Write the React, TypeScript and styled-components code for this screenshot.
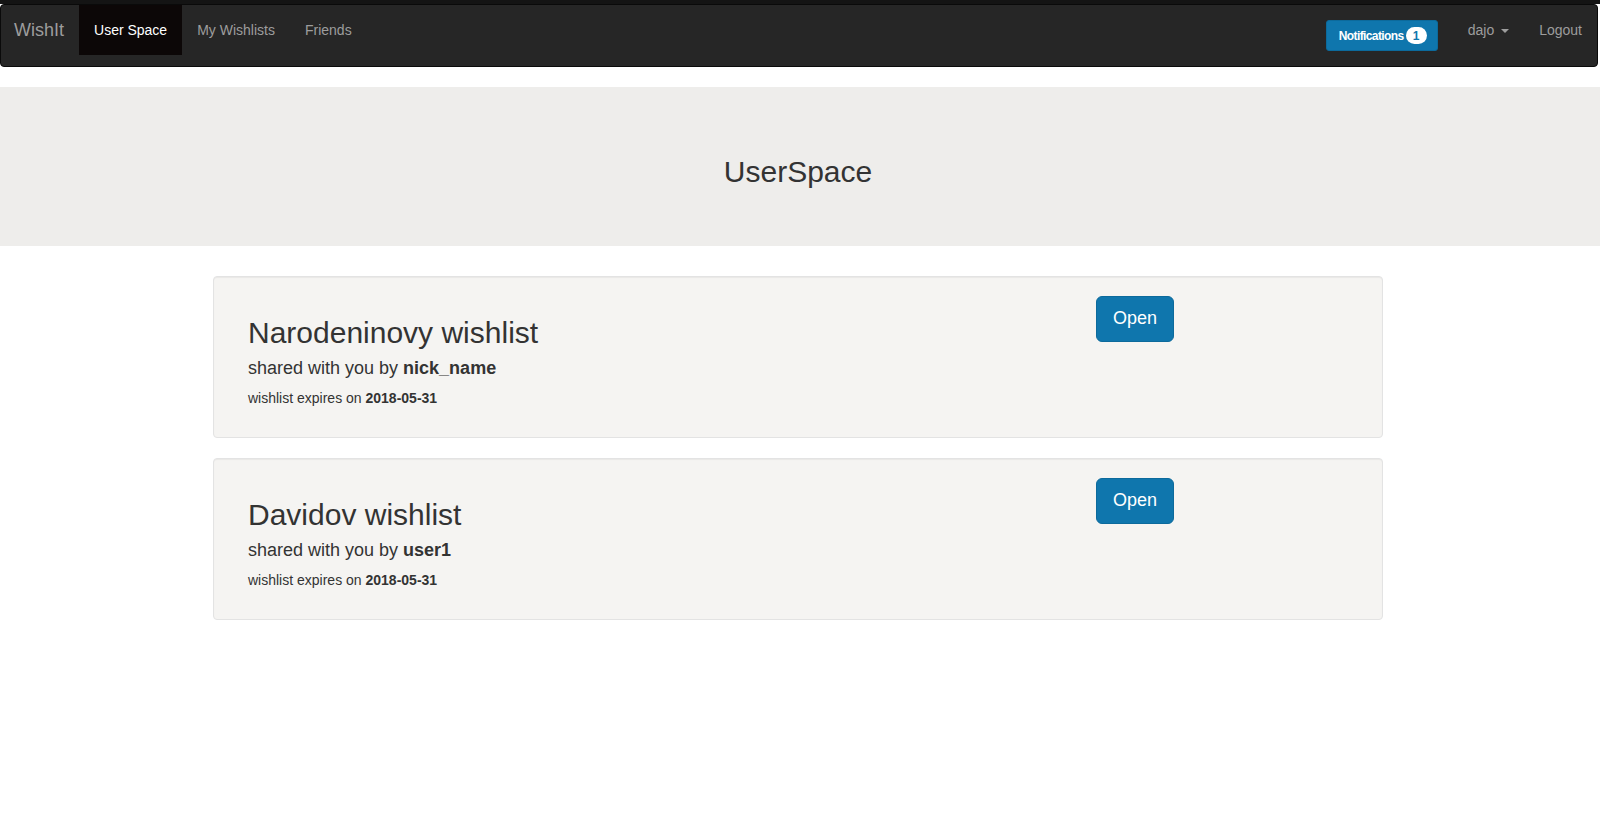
import React from "react";
import styled, { createGlobalStyle } from "styled-components";

const Global = createGlobalStyle`
  html, body { margin: 0; padding: 0; background: #fff; }
  body {
    font-family: "Liberation Sans", Arial, Helvetica, sans-serif;
    font-size: 14px;
    line-height: 1.42857;
    color: #333;
  }
  * { box-sizing: border-box; }
`;

const TopStrip = styled.div`
  height: 4px;
  background: #141414;
`;

const Navbar = styled.nav`
  margin-right: 2px;
  height: 63px;
  background: #262626;
  border: 1px solid #0a0a0a;
  border-radius: 4px;
  display: flex;
  align-items: flex-start;
  justify-content: space-between;
  margin-bottom: 20px;
`;

const NavGroup = styled.div`
  display: flex;
  align-items: flex-start;
`;

const Brand = styled.a`
  height: 50px;
  padding: 15px 15px 15px 13px;
  font-size: 18px;
  line-height: 20px;
  color: #9d9d9d;
  text-decoration: none;
`;

const NavLink = styled.a<{ $active?: boolean }>`
  display: flex;
  align-items: center;
  height: 50px;
  padding: 15px;
  line-height: 20px;
  font-size: 14px;
  color: ${(p) => (p.$active ? "#fff" : "#9d9d9d")};
  background: ${(p) => (p.$active ? "#0c0707" : "transparent")};
  text-decoration: none;
`;

const Caret = styled.span`
  display: inline-block;
  width: 0;
  height: 0;
  margin-left: 7px;
  margin-top: 1px;
  border-top: 4px solid #9d9d9d;
  border-left: 4px solid transparent;
  border-right: 4px solid transparent;
`;

const NotifButton = styled.button`
  margin-top: 15px;
  margin-right: 15px;
  height: 31px;
  width: 112px;
  padding: 0 10px 0 12px;
  display: flex;
  align-items: center;
  justify-content: space-between;
  background: #0f76ad;
  border: 1px solid #0c6a9c;
  border-radius: 3px;
  color: #fff;
  font-family: "Liberation Sans", Arial, sans-serif;
  font-size: 12px;
  font-weight: bold;
  letter-spacing: -0.6px;
  line-height: 18px;
`;

const Badge = styled.span`
  display: inline-flex;
  align-items: center;
  justify-content: center;
  min-width: 21px;
  height: 17px;
  padding: 0 6px;
  border-radius: 10px;
  background: #fff;
  color: #0f76ad;
  font-size: 12px;
  font-weight: bold;
  letter-spacing: 0;
  line-height: 1;
`;

const Jumbotron = styled.header`
  background: #eeedeb;
  padding: 68px 4px 58px 0;
  margin-bottom: 30px;
  text-align: center;
`;

const PageTitle = styled.h1`
  margin: 0;
  font-size: 30px;
  font-weight: 500;
  line-height: 33px;
  color: #333;
`;

const Main = styled.main`
  padding-right: 4px;
`;

const Container = styled.div`
  width: 1170px;
  margin: 0 auto;
`;

const Well = styled.section`
  background: #f5f4f2;
  border: 1px solid #e3e3e3;
  border-radius: 4px;
  box-shadow: inset 0 1px 1px rgba(0, 0, 0, 0.05);
  padding: 19px;
  margin-bottom: 20px;
  display: grid;
  grid-template-columns: 863px auto;
`;

const Info = styled.div`
  padding: 0 15px;
`;

const WishTitle = styled.h2`
  margin: 20px 0 10px;
  font-size: 30px;
  font-weight: 500;
  line-height: 33px;
  color: #333;
`;

const SharedBy = styled.h4`
  margin: 10px 0 10px;
  font-size: 18px;
  font-weight: 500;
  line-height: 19.8px;
  color: #333;
`;

const Expires = styled.p`
  margin: -1px 0 10px;
  font-size: 14px;
  line-height: 20px;
`;

const Actions = styled.div`
  display: flex;
  align-items: flex-start;
`;

const OpenButton = styled.button`
  height: 46px;
  padding: 0 16px;
  background: #0f76ad;
  border: 1px solid #0c6a9c;
  border-radius: 6px;
  color: #fff;
  font-family: "Liberation Sans", Arial, sans-serif;
  font-size: 18px;
  line-height: 1.3333;
`;

const wishlists = [
  { title: "Narodeninovy wishlist", by: "nick_name", expires: "2018-05-31" },
  { title: "Davidov wishlist", by: "user1", expires: "2018-05-31" },
];

export default function App() {
  return (
    <>
      <Global />
      <TopStrip />
      <Navbar>
        <NavGroup>
          <Brand href="#">WishIt</Brand>
          <NavLink $active href="#">User Space</NavLink>
          <NavLink href="#">My Wishlists</NavLink>
          <NavLink href="#">Friends</NavLink>
        </NavGroup>
        <NavGroup>
          <NotifButton>
            Notifications<Badge>1</Badge>
          </NotifButton>
          <NavLink href="#">
            dajo<Caret />
          </NavLink>
          <NavLink href="#">Logout</NavLink>
        </NavGroup>
      </Navbar>
      <Jumbotron>
        <PageTitle>UserSpace</PageTitle>
      </Jumbotron>
      <Main>
        <Container>
          {wishlists.map((w) => (
            <Well key={w.title}>
              <Info>
                <WishTitle>{w.title}</WishTitle>
                <SharedBy>
                  shared with you by <b>{w.by}</b>
                </SharedBy>
                <Expires>
                  wishlist expires on <b>{w.expires}</b>
                </Expires>
              </Info>
              <Actions>
                <OpenButton>Open</OpenButton>
              </Actions>
            </Well>
          ))}
        </Container>
      </Main>
    </>
  );
}
